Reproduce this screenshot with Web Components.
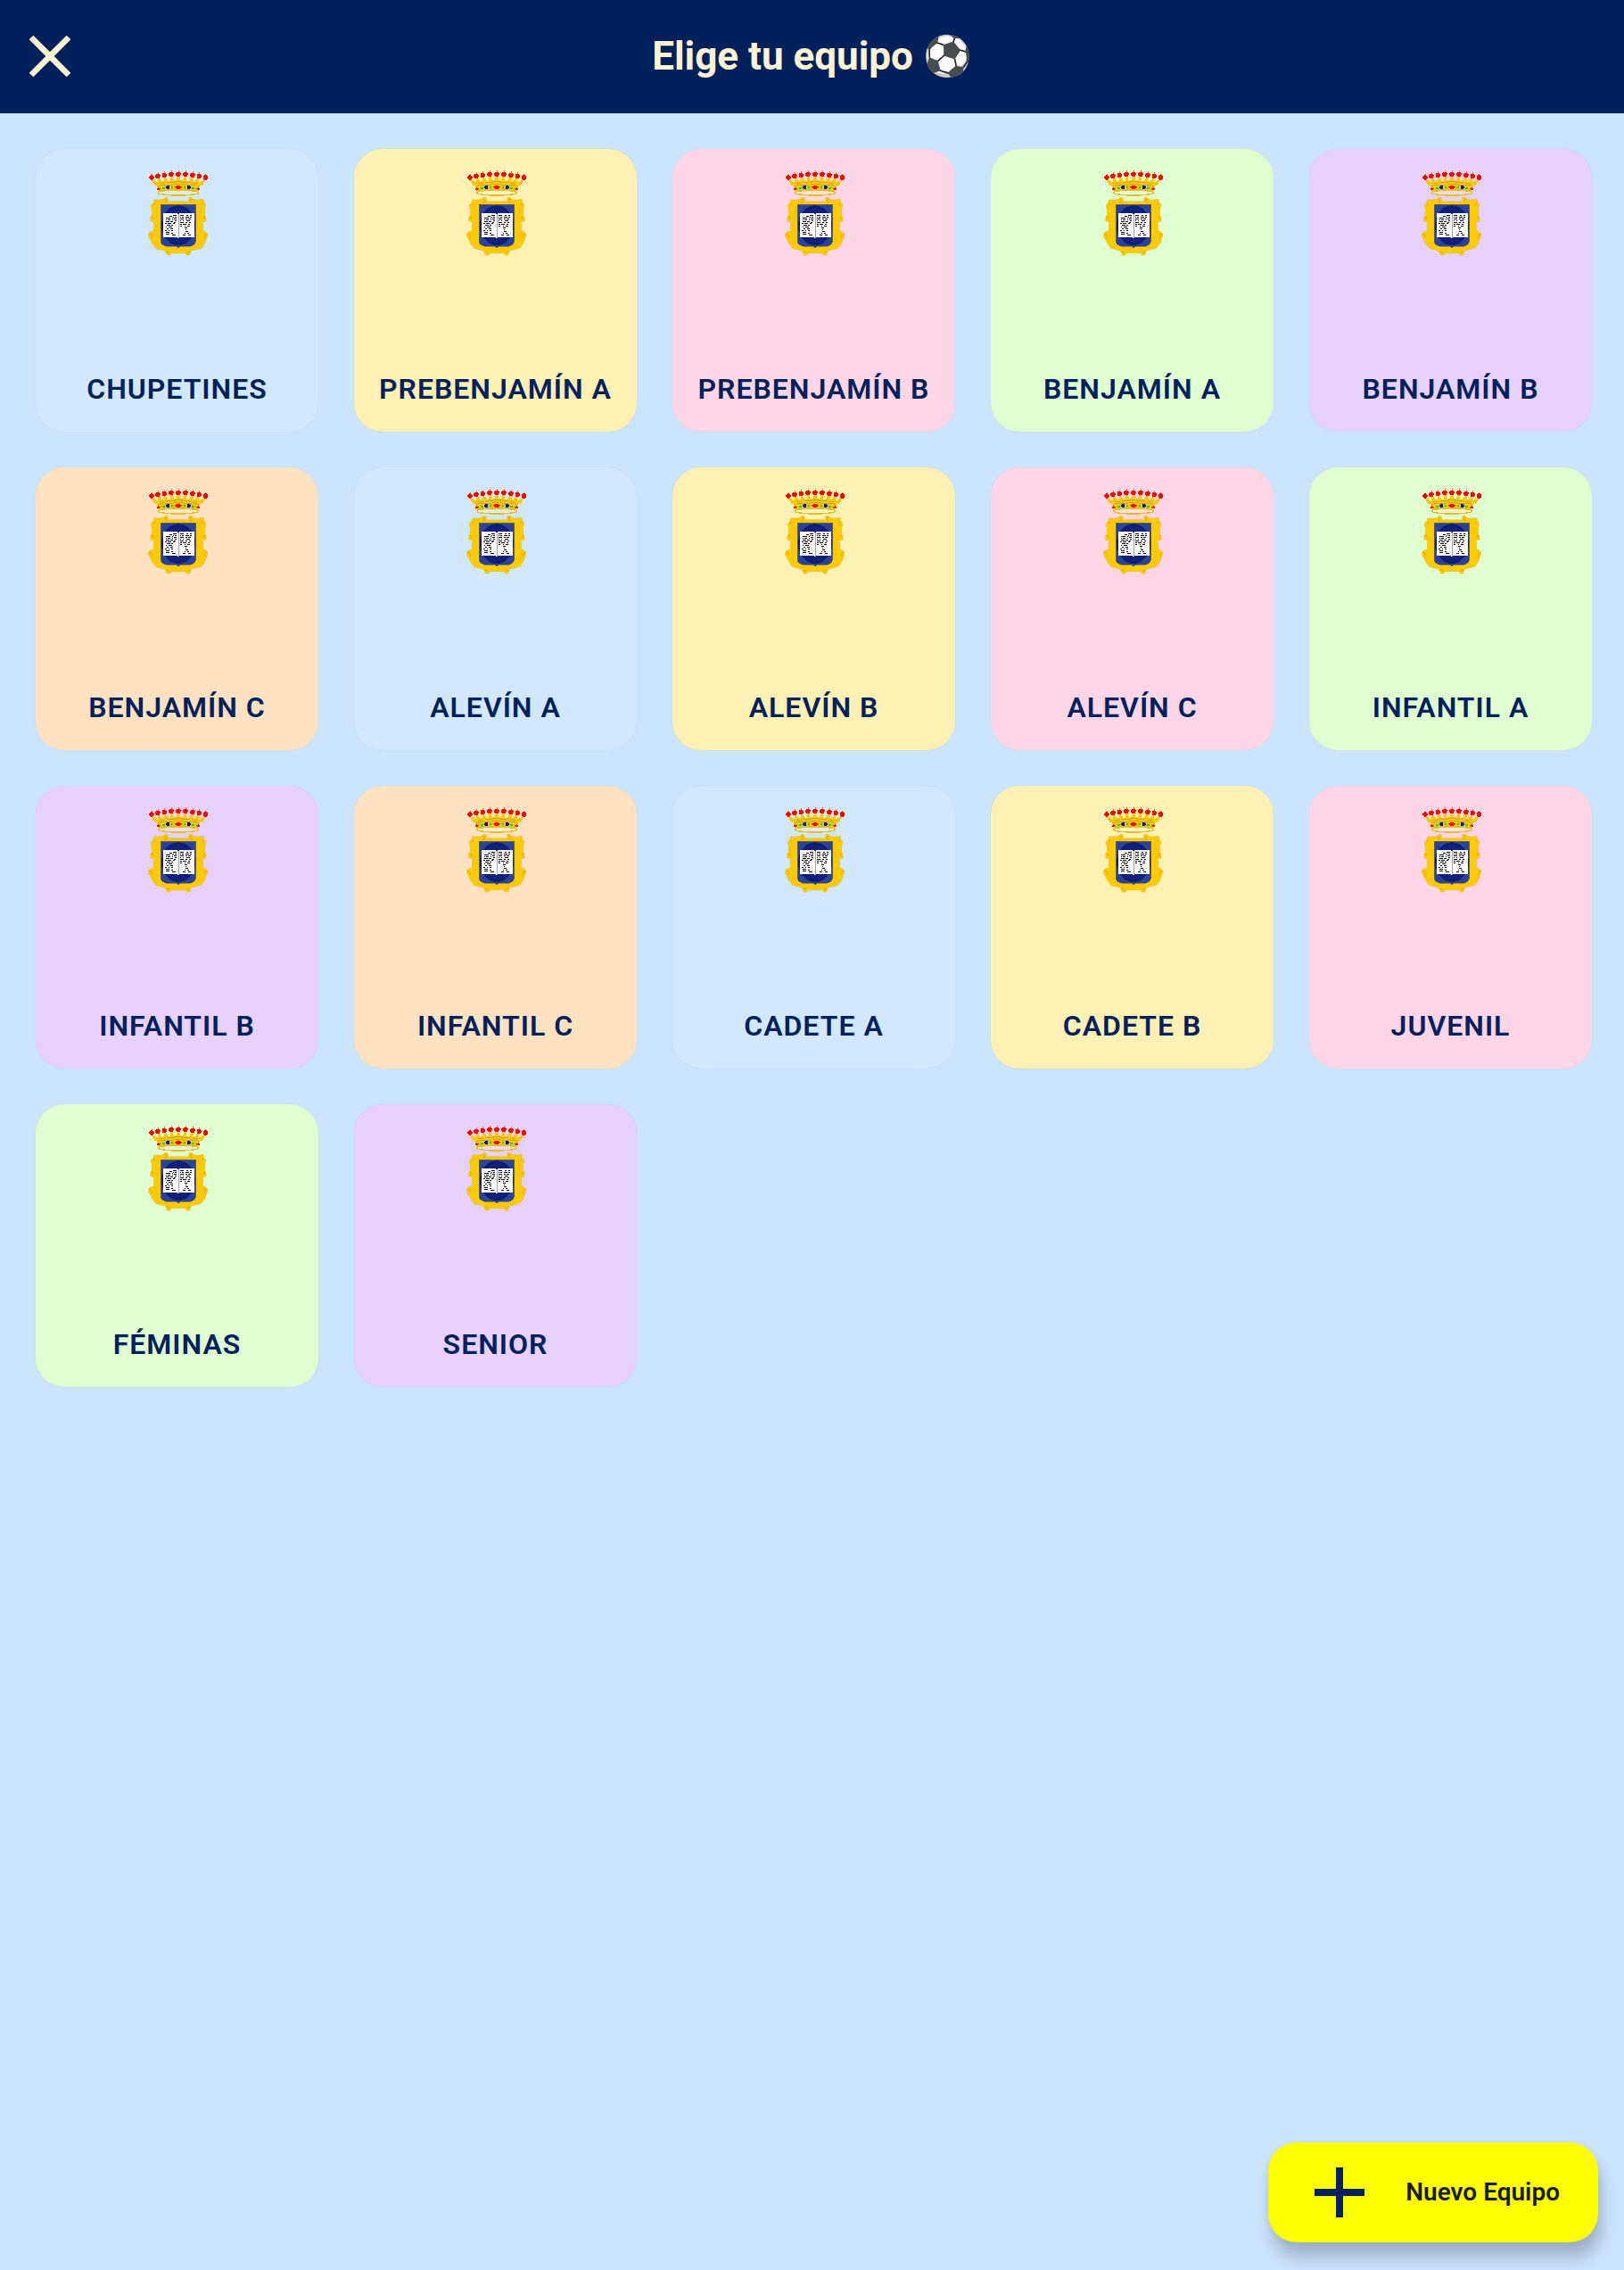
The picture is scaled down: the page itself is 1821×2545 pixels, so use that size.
<!DOCTYPE html>
<html lang="es">
<head>
<meta charset="utf-8">
<meta name="viewport" content="width=device-width, initial-scale=1">
<title>Elige tu equipo</title>
<style>
  body { margin: 0; font-family: Roboto, "Liberation Sans", sans-serif; }
</style>
</head>
<body>
<team-picker></team-picker>

<script>
const define = (name, html) => {
  const template = document.createElement('template');
  template.innerHTML = html;
  customElements.define(name, class extends HTMLElement {
    constructor() {
      super();
      this.attachShadow({ mode: 'open' }).append(template.content.cloneNode(true));
    }
  });
};

/* Crown: nine red pearls, each on its own golden point */
const pearls = [[58,58],[79,53],[101,50],[124,47],[148,47],[172,47],[196,50],[218,53],[239,58]];
const crown = pearls.map(([x, y]) => {
  const base = 148 + (x - 148) * 0.78;
  return `<path d="M${base - 10} 84L${x - 3} ${y + 4}L${x + 3} ${y + 4}L${base + 10} 84Z" fill="#f9c905"/>
    <path d="M${x - 2} ${y - 6}l2-6 3 1-1 6z" fill="#b08d10"/>
    <ellipse cx="${x}" cy="${y}" rx="8" ry="8.5" fill="#fa0000"/>`;
}).join('');

define('club-crest', `
<style>
  :host { display: block; width: 70px; height: 97px; }
  svg { display: block; width: 100%; height: 100%; }
</style>
<svg viewBox="40 31 210 291" shape-rendering="crispEdges" aria-hidden="true">
  ${crown}
  <path d="M72 74Q148 62 224 74L215 103Q148 89 81 103Z" fill="#f9c905"/>
  <g fill="none" stroke="#b8981c" stroke-width="2">
    <path d="M84 79q10-5 20 0M108 76q14-5 28 0M160 76q14-5 28 0M192 79q10-5 20 0"/>
    <path d="M80 86q24-6 50-4M166 82q28-2 52 4M134 72h28M132 80h34"/>
  </g>
  <ellipse cx="148" cy="109" rx="67" ry="9" fill="#f3f3ec" fill-opacity=".35" stroke="#e5bf20" stroke-width="4"/>
  <path d="M82 103Q148 91 214 103" fill="none" stroke="#e8c010" stroke-width="5"/>
  <path d="M136 90l7-5h10l7 5-7 6h-10z" fill="#fa0000"/>
  <path d="M75 97l6-5 8 3-6 7zM221 97l-6-5-8 3 6 7z" fill="#e9181c"/>
  <ellipse cx="113" cy="91" rx="7" ry="6" fill="#0000fa"/>
  <ellipse cx="183" cy="91" rx="7" ry="6" fill="#0000fa"/>
  <g fill="#19d51b"><circle cx="98" cy="94" r="4.5"/><circle cx="127" cy="91" r="4.5"/><circle cx="169" cy="91" r="4.5"/><circle cx="198" cy="94" r="4.5"/></g>

  <path d="M113 138H183V134Q181 125 189 124Q196 125 196 131Q212 136 231 131Q236 134 233 141L240 148Q242 155 237 163V187Q243 192 241 205L231 207Q227 212 232 217L230 236Q239 238 245 247Q248 257 243 262Q239 281 225 296Q207 302 193 303L188 311Q190 319 182 320Q173 320 173 312H124Q123 320 115 320Q107 319 107 311L102 304L73 297Q58 280 53 265Q46 259 48 248Q53 237 65 239V217Q69 210 64 207L54 204Q52 193 57 188L59 185V163Q53 157 57 149L65 143Q63 137 67 132Q80 135 99 131Q101 124 109 125Q116 130 113 138Z" fill="#ffcb00" stroke="#c9a62d" stroke-width="1" shape-rendering="auto"/>
  <g fill="none" stroke="#b8961c" stroke-width="2" shape-rendering="auto">
    <path d="M101 132q7-2 7 5q0 7-8 6M195 131q-7-2-7 5q0 7 8 6"/>
    <path d="M64 143q7 5 1 9M232 143q-7 5-1 9M56 190q9 1 8 9M240 190q-9 1-8 9"/>
    <path d="M50 248q11 0 9 13M246 248q-11 0-9 13"/>
    <path d="M108 308q8-3 10 5M188 308q-8-3-10 5"/>
  </g>
  <path d="M88 148H207V274Q204 287 189 289H158Q152 290 148 296Q144 290 138 289H105Q91 286 88 274Z" fill="#29429a" stroke="#776f32" stroke-width="2"/>
  <ellipse cx="148" cy="219" rx="57" ry="67" fill="#11217a"/>
  <ellipse cx="148" cy="219" rx="52" ry="62" fill="none" stroke="#0b1762" stroke-width="4" stroke-dasharray="5 5"/>
  <path d="M96 179L142 177L148 181L154 177L201 179V260H154L148 262L142 260H96Z" fill="#fff"/>
  <path d="M148 181V261" stroke="#a5a896" stroke-width="3"/>
  <g fill="none" stroke="#000" stroke-width="3">
    <path d="M130 185h12M118 189h8M129 190h5M137 190h6M107 195h15M126 195h4M133 196h9M105 200h5M113 200h9M128 201h3M136 202h6M107 206h11M122 207h7M134 208h4M104 212h6M113 212h10M129 213h7M108 218h13M125 219h4M105 224h5M114 224h12M108 230h8M122 231h7M104 236h5M114 237h3M125 237h4M107 243h10M125 244h5M105 249h12M127 250h11"/>
    <path d="M153 186h14M174 185h6M188 186h4M153 191h5M161 191h6M172 192h11M187 191h5M154 196h13M172 197h5M182 198h8M153 202h5M163 202h4M174 203h13M154 208h12M172 208h6M184 209h5M155 214h4M164 214h11M181 215h6M154 220h6M168 220h5M178 221h9M169 227h10M171 233h4M172 239h9M168 245h5M177 246h6M164 251h7M182 252h7"/>
  </g>
</svg>`);

define('team-card', `
<style>
  :host { display: block; aspect-ratio: 1; }
  button {
    box-sizing: border-box; width: 100%; height: 100%; margin: 0; border: 0;
    padding: 23px 16px 28px; border-radius: 32px;
    display: flex; flex-direction: column; align-items: center; justify-content: space-between;
    background: var(--card); box-shadow: 0 0 1px rgba(0, 0, 0, .14);
    color: #00205b; font: 600 32px/40px Roboto, "Liberation Sans", sans-serif;
    letter-spacing: 1px; white-space: nowrap; cursor: pointer;
  }
</style>
<button type="button"><club-crest></club-crest><span><slot></slot></span></button>`);

define('app-bar', `
<style>
  :host { display: block; background: #00205b; color: #fff3d1; }
  header { display: grid; grid-template-columns: 80px 1fr 80px; align-items: center; height: 126px; padding: 0 16px 1px; }
  button { width: 80px; height: 80px; padding: 0; border: 0; background: none; color: inherit; cursor: pointer; }
  svg { display: block; width: 80px; height: 80px; }
  h1 { margin: 0; text-align: center; font-size: 44px; line-height: 56px; font-weight: 700; }
</style>
<header>
  <button type="button" aria-label="Cerrar">
    <svg viewBox="0 0 24 24" fill="currentColor"><path d="M19 6.41 17.59 5 12 10.59 6.41 5 5 6.41 10.59 12 5 17.59 6.41 19 12 13.41 17.59 19 19 17.59 13.41 12z"/></svg>
  </button>
  <h1><slot></slot></h1>
</header>`);

define('new-team-button', `
<style>
  :host { display: block; }
  button {
    display: flex; align-items: center; gap: 26px; height: 112px; margin: 0; border: 0;
    padding: 0 43px 0 32px; border-radius: 32px; background: #ff0; color: #191c1e;
    font: 600 28px/40px Roboto, "Liberation Sans", sans-serif; white-space: nowrap;
    box-shadow: 4px 18px 18px rgba(0, 0, 0, .21), 0 2px 8px rgba(0, 0, 0, .06); cursor: pointer;
  }
  svg { width: 96px; height: 96px; }
</style>
<button type="button">
  <svg viewBox="0 0 24 24" fill="#00205b" aria-hidden="true"><path d="M19 13h-6v6h-2v-6H5v-2h6V5h2v6h6z"/></svg>
  <span><slot></slot></span>
</button>`);

const tints = ['#d1e8ff', '#fff0b3', '#ffd6e7', '#dfffd1', '#e6d1ff', '#ffe2c2'];
const teams = ['CHUPETINES', 'PREBENJAMÍN A', 'PREBENJAMÍN B', 'BENJAMÍN A', 'BENJAMÍN B', 'BENJAMÍN C',
  'ALEVÍN A', 'ALEVÍN B', 'ALEVÍN C', 'INFANTIL A', 'INFANTIL B', 'INFANTIL C',
  'CADETE A', 'CADETE B', 'JUVENIL', 'FÉMINAS', 'SENIOR'];

define('team-picker', `
<style>
  :host { display: flex; flex-direction: column; min-height: 100vh; background: #cce5ff; }
  main { flex: 1; display: grid; grid-template-columns: repeat(5, minmax(0, 1fr)); gap: 40px; align-content: start; padding: 40px 36px 40px 40px; }
  footer { display: flex; justify-content: flex-end; padding: 0 29px 31px; }
</style>
<app-bar>Elige tu equipo ⚽</app-bar>
<main>${teams.map((team, i) => `<team-card style="--card:${tints[i % tints.length]}">${team}</team-card>`).join('')}</main>
<footer><new-team-button>Nuevo Equipo</new-team-button></footer>`);
</script>
</body>
</html>
